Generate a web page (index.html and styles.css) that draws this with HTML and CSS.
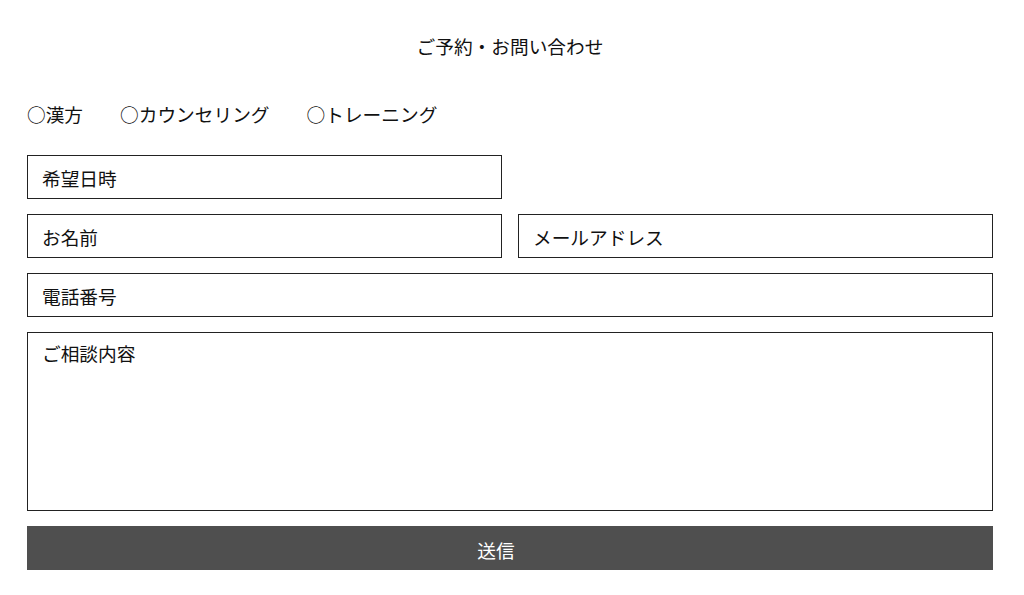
FILE: index.html
```html
<!DOCTYPE html>
<html lang="ja">
<head>
<meta charset="utf-8">
<title>ご予約・お問い合わせ</title>
<link rel="stylesheet" href="styles.css">
</head>
<body>
<form class="form">
  <h1 class="title">ご予約・お問い合わせ</h1>
  <div class="choices">
    <span class="choice">○漢方</span>
    <span class="choice">○カウンセリング</span>
    <span class="choice">○トレーニング</span>
  </div>
  <div class="grid">
    <input class="field" type="text" placeholder="希望日時">
    <div class="spacer"></div>
    <input class="field" type="text" placeholder="お名前">
    <input class="field" type="email" placeholder="メールアドレス">
    <input class="field wide" type="tel" placeholder="電話番号">
    <textarea class="field wide area" placeholder="ご相談内容"></textarea>
    <button class="submit wide" type="button">送信</button>
  </div>
</form>
</body>
</html>
```
FILE: styles.css
```css
* { box-sizing: border-box; }
html, body { margin: 0; padding: 0; background: #fff; }
body {
  font-family: "Noto Sans CJK JP", "Noto Sans", sans-serif;
  color: #111;
}
.form {
  margin: 0 31px 0 27px;
  padding-top: 34px;
}
.title {
  margin: 0;
  font-size: 18.7px;
  font-weight: 400;
  line-height: 24px;
  text-align: center;
}
.choices {
  margin-top: 44px;
  display: flex;
  gap: 37px;
  font-size: 18.7px;
  line-height: 24px;
}
.grid {
  margin-top: 29px;
  display: grid;
  grid-template-columns: 1fr 1fr;
  column-gap: 16px;
  row-gap: 15px;
}
.field {
  display: block;
  width: 100%;
  height: 44px;
  margin: 0;
  padding: 0 14px;
  border: 1px solid #222;
  border-radius: 0;
  background: #fff;
  font-family: inherit;
  font-size: 18.7px;
  color: #111;
  outline: none;
}
.field::placeholder { color: #111; opacity: 1; }
.wide { grid-column: 1 / -1; }
.area {
  height: 179px;
  padding: 8px 14px;
  resize: none;
  line-height: 24px;
}
.submit {
  height: 44px;
  margin: 0;
  padding: 2px 28px 0 0;
  border: none;
  background: #4f4f4f;
  color: #fff;
  font-family: inherit;
  font-size: 18.7px;
  text-align: center;
}
```
